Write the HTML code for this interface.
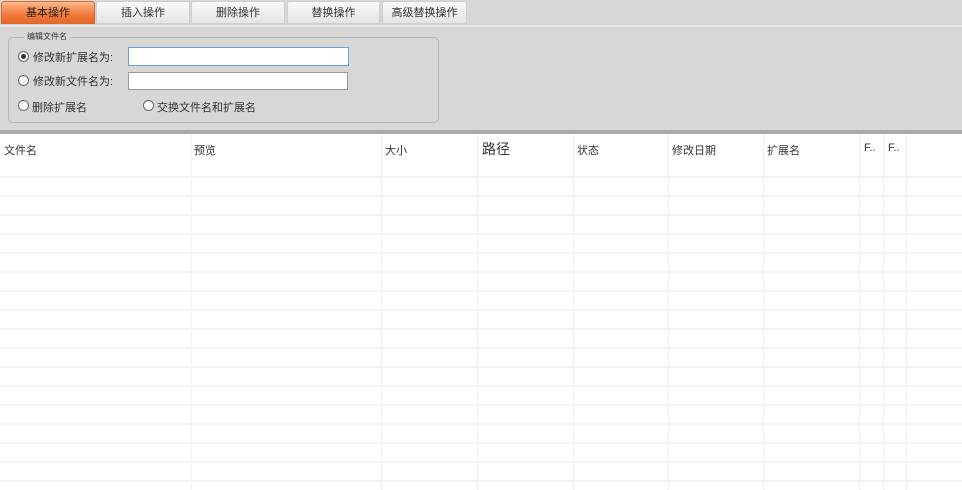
<!DOCTYPE html>
<html><head><meta charset="utf-8"><style>
*{margin:0;padding:0;box-sizing:border-box}
body{width:962px;height:490px;overflow:hidden;background:#d8d7d5;font-family:"Liberation Sans","Noto Sans CJK SC",sans-serif;font-size:11px;color:#222;position:relative}
.tab{position:absolute;top:1px;height:23px;line-height:23px;text-align:center;font-size:11px;background:linear-gradient(#fafafa,#e4e4e4);border:1px solid #cfcfcf;border-radius:3px 3px 0 0;color:#333}
.tab.on{background:linear-gradient(#fbb98a,#f07a3a 60%,#e8682a);border-color:#d86a30;color:#222}
.ab{position:absolute}
.radio{position:absolute;width:11px;height:11px;border:1px solid #666;border-radius:50%;background:#fff}
.radio.c::after{content:"";position:absolute;left:2px;top:2px;width:5px;height:5px;border-radius:50%;background:#333}
.lbl{position:absolute;font-size:11px;color:#333}
.inp{position:absolute;background:#fff;border:1px solid #999}
.table{position:absolute;left:0;top:134px;width:962px;height:356px;background:#fff}
.hl{position:absolute;left:0;width:962px;height:2px;background:#f3f3f3}
.vl{position:absolute;top:0;width:1px;height:356px;background:#f0f0f0}
.th{position:absolute;top:8px;font-size:11px;color:#333}
</style></head><body>
<div class="tab on" style="left:1px;width:94px">基本操作</div>
<div class="tab" style="left:96px;width:94px">插入操作</div>
<div class="tab" style="left:191px;width:94px">删除操作</div>
<div class="tab" style="left:287px;width:93px">替换操作</div>
<div class="tab" style="left:382px;width:85px">高级替换操作</div>
<div class="ab" style="left:0;top:25px;width:962px;height:2px;background:#e6e5e3"></div>

<div class="ab" style="left:8px;top:37px;width:431px;height:86px;border:1px solid #b4b4b4;border-radius:5px"></div>
<div class="lbl" style="left:24px;top:31px;font-size:8px;background:#d8d7d5;padding:0 3px">编辑文件名</div>
<div class="radio c" style="left:18px;top:51px"></div>
<div class="lbl" style="left:33px;top:49px">修改新扩展名为:</div>
<div class="inp" style="left:128px;top:47px;width:221px;height:19px;border:1px solid #6aa0d8"></div>
<div class="radio" style="left:18px;top:75px"></div>
<div class="lbl" style="left:33px;top:73px">修改新文件名为:</div>
<div class="inp" style="left:128px;top:72px;width:220px;height:18px"></div>
<div class="radio" style="left:18px;top:100px"></div>
<div class="lbl" style="left:32px;top:99px">删除扩展名</div>
<div class="radio" style="left:143px;top:100px"></div>
<div class="lbl" style="left:157px;top:99px">交换文件名和扩展名</div>

<div class="ab" style="left:0;top:130px;width:962px;height:4px;background:#aaa"></div>
<div class="table">
<div class="vl" style="left:191px"></div><div class="vl" style="left:381px"></div><div class="vl" style="left:477px"></div><div class="vl" style="left:573px"></div><div class="vl" style="left:668px"></div><div class="vl" style="left:763px"></div><div class="vl" style="left:859px"></div><div class="vl" style="left:883px"></div><div class="vl" style="left:906px"></div>
<div class="th" style="left:4px">文件名</div>
<div class="th" style="left:194px">预览</div>
<div class="th" style="left:385px">大小</div>
<div class="th" style="left:482px;top:5px;font-size:14px">路径</div>
<div class="th" style="left:577px">状态</div>
<div class="th" style="left:672px">修改日期</div>
<div class="th" style="left:767px">扩展名</div>
<div class="th" style="left:864px">F..</div>
<div class="th" style="left:888px">F..</div>
<div class="hl" style="top:42px"></div><div class="hl" style="top:61px"></div><div class="hl" style="top:80px"></div><div class="hl" style="top:99px"></div><div class="hl" style="top:118px"></div><div class="hl" style="top:137px"></div><div class="hl" style="top:156px"></div><div class="hl" style="top:175px"></div><div class="hl" style="top:194px"></div><div class="hl" style="top:213px"></div><div class="hl" style="top:232px"></div><div class="hl" style="top:251px"></div><div class="hl" style="top:270px"></div><div class="hl" style="top:289px"></div><div class="hl" style="top:308px"></div><div class="hl" style="top:327px"></div><div class="hl" style="top:346px"></div>
</div>
</body></html>
